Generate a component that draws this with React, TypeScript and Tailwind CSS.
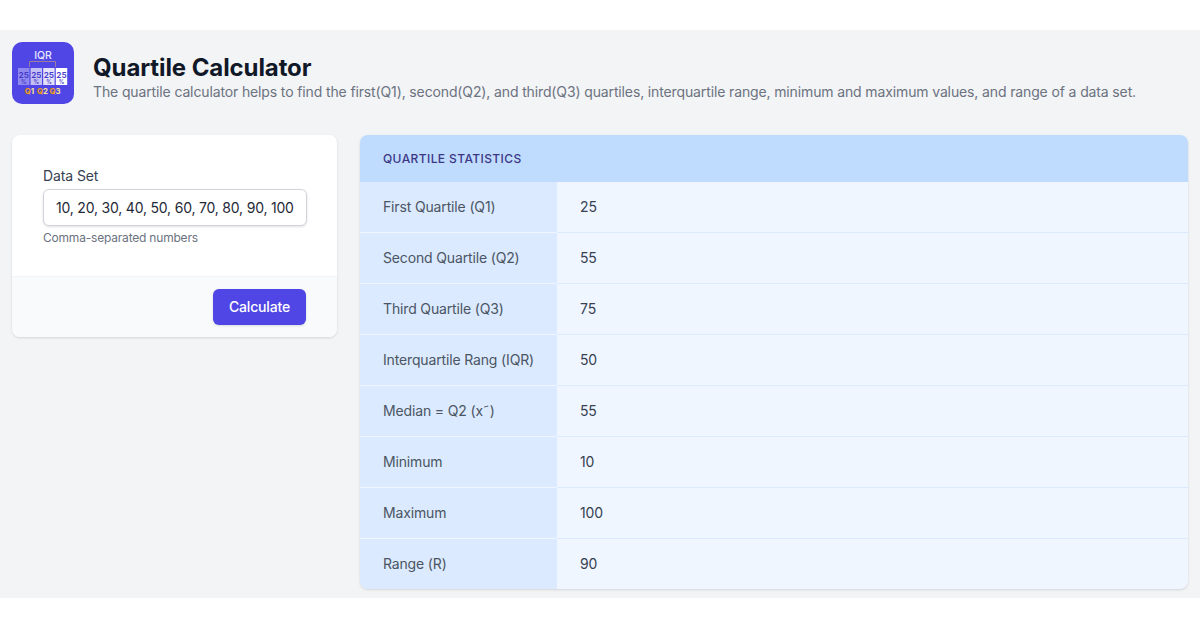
const rows: [string, string][] = [
  ["First Quartile (Q1)", "25"],
  ["Second Quartile (Q2)", "55"],
  ["Third Quartile (Q3)", "75"],
  ["Interquartile Rang (IQR)", "50"],
  ["Median = Q2 (x˜)", "55"],
  ["Minimum", "10"],
  ["Maximum", "100"],
  ["Range (R)", "90"],
];

function Logo() {
  const cells = [
    { x: 6, fill: "#8f88ee", c: "#3f37c9" },
    { x: 18.6, fill: "#c3bff5", c: "#4338ca" },
    { x: 31.2, fill: "#e4e2fb", c: "#4338ca" },
    { x: 43.8, fill: "#ffffff", c: "#4338ca" },
  ];
  return (
    <svg width="62" height="62" viewBox="0 0 62 62" className="shrink-0">
      <rect width="62" height="62" rx="10" fill="#4f46e5" />
      <text x="31" y="16.5" textAnchor="middle" fontSize="10.5" fontWeight="500" fill="#e8e7fb" fontFamily="Inter, sans-serif">IQR</text>
      <path d="M17.5 25V19.5H43.5V25" fill="none" stroke="#b08a8a" strokeWidth="0.8" />
      {cells.map((c, i) => (
        <g key={i}>
          <rect x={c.x} y="26" width="11.4" height="17" fill={c.fill} />
          <text x={c.x + 5.7} y="35.5" textAnchor="middle" fontSize="8.2" fontWeight="600" fill={c.c} fontFamily="Inter, sans-serif">25</text>
          <text x={c.x + 5.7} y="42" textAnchor="middle" fontSize="5.5" fontWeight="600" fill={c.c} fontFamily="Inter, sans-serif">%</text>
        </g>
      ))}
      {[
        [17.5, "1"],
        [30.5, "2"],
        [43, "3"],
      ].map(([x, n]) => (
        <text key={n as string} x={x as number} y="51.5" textAnchor="middle" fontSize="7.8" fontWeight="700" fontFamily="Inter, sans-serif">
          <tspan fill="#f59e0b">Q</tspan>
          <tspan fill="#fde68a">{n as string}</tspan>
        </text>
      ))}
    </svg>
  );
}

export default function App() {
  return (
    <div className="h-[628px] w-[1200px] overflow-hidden bg-white pt-[30px] font-['Inter',sans-serif]">
      <div className="h-[568px] bg-[#f3f4f6] px-3 pt-3">
        <div className="flex h-[62px] items-start gap-[19px]">
          <Logo />
          <div className="pt-[11px]">
            <h1 className="text-2xl leading-[29px] font-bold tracking-[-0.1px] text-[#111827]">Quartile Calculator</h1>
            <p className="text-sm leading-[20px] tracking-[-0.13px] whitespace-nowrap text-[#6b7280]">
              The quartile calculator helps to find the first(Q1), second(Q2), and third(Q3) quartiles, interquartile range, minimum and maximum values, and range of a data set.
            </p>
          </div>
        </div>
        <div className="mt-[31px] flex items-start gap-[23px]">
          <div className="w-[325px] overflow-hidden rounded-lg bg-white shadow">
            <div className="h-[141px] px-[31px] pt-[31px]">
              <label className="block text-sm leading-[20px] tracking-[-0.1px] text-[#374151]">Data Set</label>
              <div className="mt-[3px] flex h-[37px] w-[264px] items-center rounded-md border border-[#d1d5db] bg-white pl-3 text-sm tracking-[-0.2px] whitespace-nowrap text-[#1f2937] shadow-sm">
                10, 20, 30, 40, 50, 60, 70, 80, 90, 100
              </div>
              <p className="mt-[4px] text-xs leading-[16px] tracking-[-0.2px] text-[#6b7280]">Comma-separated numbers</p>
            </div>
            <div className="flex h-[61px] justify-end border-t border-[#f3f4f6] bg-[#f9fafb] pt-3 pr-[31px]">
              <button className="h-[36px] w-[93px] rounded-md bg-[#4f46e5] text-sm font-medium tracking-[-0.15px] text-white shadow-sm">Calculate</button>
            </div>
          </div>
          <div className="w-[828px] overflow-hidden rounded-lg bg-[#eff6ff] shadow">
            <div className="flex h-[47px] items-center bg-[#bfdbfe] px-[23px] text-xs font-medium tracking-[0.4px] text-[#3b3785] uppercase">
              Quartile Statistics
            </div>
            {rows.map(([label, value], i) => {
              const last = i === rows.length - 1;
              return (
                <div key={label} className={`flex text-sm tracking-[-0.15px] ${last ? "h-[50px]" : "h-[51px]"}`}>
                  <div className={`flex w-[197px] items-center bg-[#dbeafe] pl-[23px] text-[#4b5563] ${last ? "" : "border-b border-[#eff6ff]"}`}>{label}</div>
                  <div className={`flex flex-1 items-center pl-[23px] text-[#374151] ${last ? "" : "border-b border-[#dbeafe]"}`}>{value}</div>
                </div>
              );
            })}
          </div>
        </div>
      </div>
    </div>
  );
}
